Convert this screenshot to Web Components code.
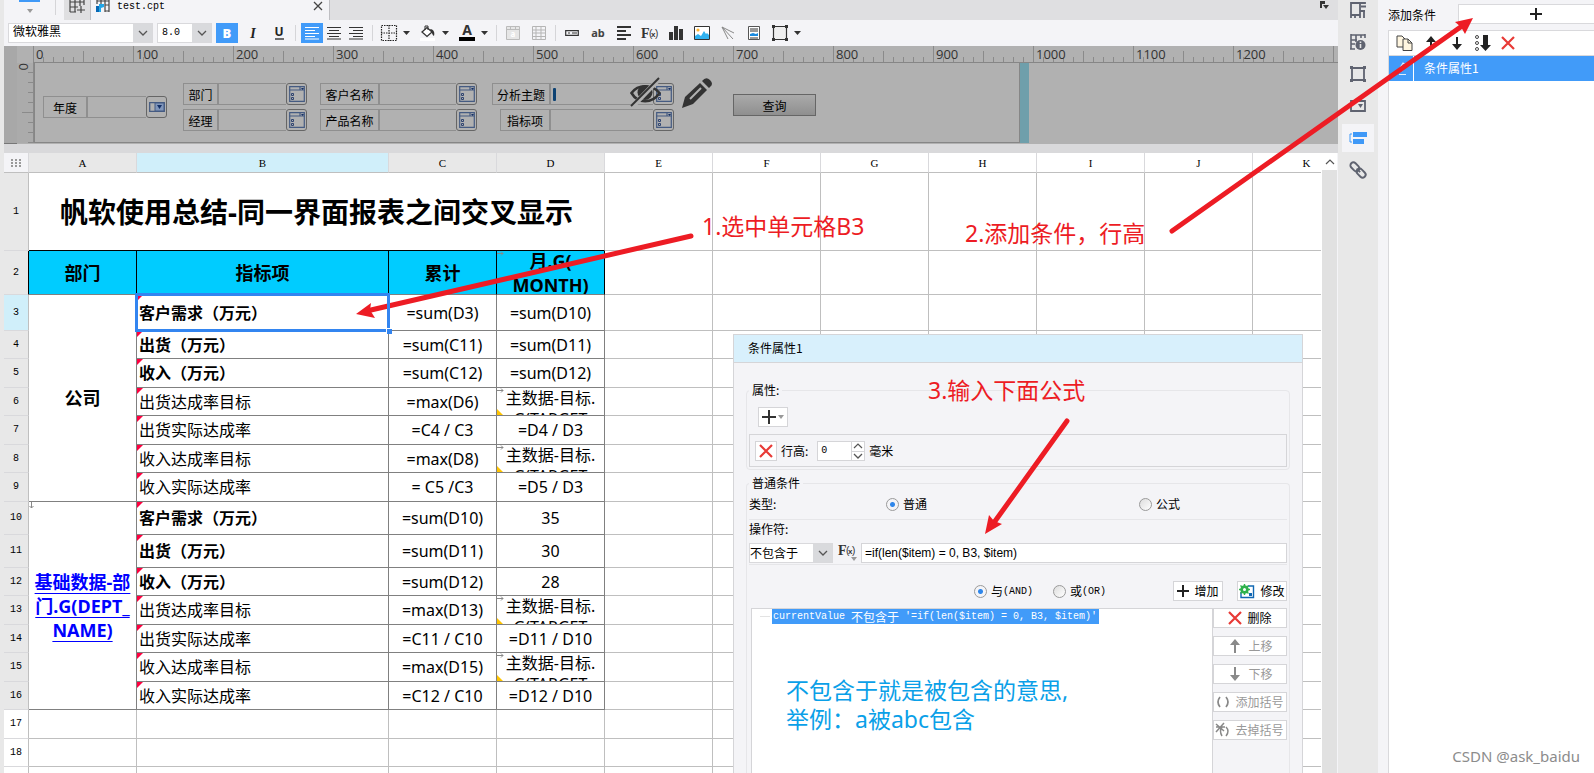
<!DOCTYPE html>
<html lang="zh-CN">
<head>
<meta charset="utf-8">
<title>test.cpt</title>
<style>
  body { margin: 0; font-family: "Liberation Mono", "Noto Sans CJK SC", sans-serif; font-size: 12px; color: #000; background: #fff; }
</style>
</head>
<body>
<report-designer></report-designer>
<script>
const CJK = '"Noto Sans", "Noto Sans CJK SC", sans-serif';

const RESET = `
  *, *::before, *::after { box-sizing: border-box; }
  button, input, select { font: inherit; color: inherit; margin: 0; padding: 0; border: 0; border-radius: 0; background: none; }
  button { display: flex; align-items: center; justify-content: center; }
  select { appearance: none; outline: none; }
`;

function define(name, css, html) {
  customElements.define(name, class extends HTMLElement {
    connectedCallback() {
      if (this.shadowRoot) return;
      const root = this.attachShadow({ mode: 'open' });
      root.innerHTML = `<style>${RESET}${css}</style>${typeof html === 'function' ? html(this) : html}`;
    }
  });
}

const ICONS = {
  chevron: ['10 6', '<path d="M1 1 5 5 9 1" fill="none" stroke="#555" stroke-width="1.300"/>'],
  chevronUp: ['10 6', '<path d="M1 5 5 1 9 5" fill="none" stroke="#555" stroke-width="1.200"/>'],
  caret: ['8 5', '<path d="M0 0H7L3.500 4z" fill="#333"/>'],
  caretGrey: ['6 4', '<path d="M0 0H6L3 4z" fill="#999"/>'],
  close: ['8 8', '<path d="M0 0 8 8M8 0 0 8" stroke="#444" stroke-width="1.300"/>'],
  gridPlus: ['16 14', '<path d="M1 0V12M6 0V12M11 0V6M1 2H15M1 7H9M1 12H7M15 0V5M12 6V13M8 10H16" stroke="#444" stroke-width="1.200" fill="none"/>'],
  cptFile: ['14 13', '<path d="M1 0V4M5 0V4M9 0V12M13 0V12M1 1H13M9 5H13M9 11H13" stroke="#444" stroke-width="1.200" fill="none"/><path d="M0 6H4V12H0z" fill="#0a68b4"/><path d="M3 4H8V7L5 8V12H3z" fill="#22a7e8"/>'],
  bold: ['12 12', '<text x="6" y="11" text-anchor="middle" font-family="Noto Sans" font-weight="900" font-size="13" fill="#fff">B</text>'],
  italic: ['12 12', '<text x="6" y="11" text-anchor="middle" font-family="Liberation Serif" font-weight="bold" font-style="italic" font-size="14" fill="#222">I</text>'],
  underline: ['12 14', '<text x="6" y="10" text-anchor="middle" font-family="Noto Sans" font-weight="bold" font-size="12" fill="#222">U</text><path d="M2 13H11" stroke="#222" stroke-width="1.300"/>'],
  left: ['16 14', '<path d="M1 1.500H15M1 4.500H11M1 7.500H15M1 10.500H11M1 13H15" stroke="#fff" stroke-width="1"/>'],
  center: ['16 14', '<path d="M1 1.500H15M3 4.500H13M1 7.500H15M3 10.500H13M1 13H15" stroke="#333" stroke-width="1.200"/>'],
  right: ['16 14', '<path d="M1 1.500H15M5 4.500H15M1 7.500H15M5 10.500H15M1 13H15" stroke="#333" stroke-width="1.200"/>'],
  border: ['16 16', '<path d="M.5.5H15.500V15.500H.5zM8 0V16M0 8H16" fill="none" stroke="#222" stroke-width="1.200" stroke-dasharray="1.500 1"/>'],
  bucket: ['16 16', '<path d="M2 7 7 2.500 12 7 7 11.500z" fill="#fff" stroke="#333" stroke-width="1.300"/><path d="M5 5V1H8V5" fill="none" stroke="#333"/><path d="M10 4C14 4 15 8 14 11 12 10 12 7 10 4z" fill="#333"/><path d="M0 13H15V16H0z" fill="#fff"/>'],
  fontColor: ['16 16', '<text x="8" y="10" text-anchor="middle" font-family="Noto Sans" font-weight="bold" font-size="14" fill="#333">A</text><path d="M0 12H16V16H0z" fill="#000"/>'],
  cellA: ['14 14', '<path d="M.5.5H13.500V13.500H.5zM0 3.500H14M4.500 0V3.500M9.500 0V3.500" fill="#e6e6e6" stroke="#bbb"/><text x="7" y="11" text-anchor="middle" font-family="Noto Sans" font-weight="bold" font-size="8" fill="#fff">a</text>'],
  grid: ['14 14', '<path d="M.5.5H13.500V13.500H.5zM0 4H14M0 7H14M0 10.500H14M4 0V14M9 0V14" fill="none" stroke="#b5b5b5"/>'],
  widget: ['14 6', '<path d="M.7.7H13.300V5.300H.7z" fill="none" stroke="#333" stroke-width="1.200"/><path d="M3 3H5M7 3H12" stroke="#333" stroke-width="1.200"/>'],
  ab: ['14 12', '<text x="7" y="10" text-anchor="middle" font-family="Noto Sans" font-weight="bold" font-size="11" fill="#444">ab</text>'],
  lines: ['14 14', '<path d="M0 1H14M0 5H9M0 9H14M0 13H9" stroke="#333" stroke-width="1.800"/>'],
  fx: ['18 14', '<text x="0" y="12" font-family="Liberation Serif" font-weight="bold" font-size="14" fill="#333">F</text><text x="8" y="11" font-family="Liberation Sans" font-size="10" fill="#333">(</text><text x="10" y="11" font-family="Liberation Sans" font-weight="bold" font-size="8" fill="#333">x</text><text x="14" y="11" font-family="Liberation Sans" font-size="10" fill="#333">)</text>'],
  bars: ['14 14', '<path d="M0 6H4V14H0zM5 0H9V14H5zM10 3H14V14H10z" fill="#333"/>'],
  picture: ['16 14', '<path d="M.5.5H15.500V13.500H.5z" fill="#fff" stroke="#333"/><circle cx="4" cy="4" r="1.600" fill="#ffb42e"/><path d="M1 13V10L4 8 7 10 10 5 12 8 13 7 15 9V13z" fill="#2fb1f0"/>'],
  slash: ['14 14', '<path d="M1 1 13 7M1 1 12 13M1 1 7 13" stroke="#888" stroke-width="1" fill="none"/>'],
  report: ['12 14', '<path d="M.5.5H11.500V13.500H.5z" fill="#fff" stroke="#555"/><path d="M2 3H10M2 5H10M2 12H10" stroke="#333"/><path d="M2 10V8L5 7 8 8 10 7V10z" fill="#1a8ae0"/>'],
  shape: ['16 16', '<path d="M1.500 1.500H14.500V14.500H1.500z" fill="#eee" stroke="#333" stroke-width="1.200"/><path d="M0 0H3V3H0zM13 0H16V3H13zM0 13H3V16H0zM13 13H16V16H13z" fill="#333"/>'],
  pin: ['9 9', '<path d="M0 0H5V3H2V7H0z" fill="#333"/><path d="M3 4H9L6 8z" fill="#333"/>'],
  dots: ['10 8', '<path d="M0 0h2v2H0zM4 0h2v2H4zM8 0h2v2H8zM0 3h2v2H0zM4 3h2v2H4zM8 3h2v2H8zM0 6h2v2H0zM4 6h2v2H4zM8 6h2v2H8z" fill="#999"/>'],
  dropWidget: ['16 10', '<path d="M.7.7H15.300V9.300H.7z" fill="none" stroke="#455b82" stroke-width="1.300"/><path d="M6 1H15V9H6z" fill="#8096bb" stroke="#455b82"/><path d="M8 3H13L10.500 7z" fill="#132f66"/>'],
  treeWidget: ['16 16', '<path d="M.7.7H15.300V15.300H.7zM0 4H16M11 1V4" fill="none" stroke="#455b82" stroke-width="1.200"/><path d="M12 2H15L13.500 4z" fill="#132f66"/><path d="M2.500 7.500H4.500V9.500H2.500zM2.500 11.500H4.500V13.500H2.500z" fill="none" stroke="#2f4470"/>'],
  eye: ['30 30', '<path d="M1.500 16C8 7 22 7 29.500 16 22 27 8 27 1.500 16z" fill="none" stroke="#333" stroke-width="2.600"/><circle cx="15" cy="15.500" r="7.500" fill="#333"/><path d="M2 30 30 1" stroke="#b1b1b1" stroke-width="5"/><path d="M1 29 29 1" stroke="#333" stroke-width="2"/>'],
  pencil: ['30 30', '<path d="M0 30 3 19 18 5 25 12 11 26z" fill="#333"/><path d="M8 21 19 10" stroke="#b1b1b1" stroke-width="2"/><path d="M20 3Q24-2 28 2 32 6 28 9L27 10 20 3z" fill="#333"/>'],
  railCell: ['16 16', '<path d="M1 0V13H10V9H15M1 1H15M5 12V16M10 12V16M10 1V10M11 4.500H16M14 9V16M1 12V16M15 0V2" fill="none" stroke="#5f6370" stroke-width="1.800"/>'],
  railInfo: ['16 16', '<path d="M1 0V15M1 1H15M6 1V8M11 1V4M1 6H7M1 10H5M0 15H5M15 0V4" fill="none" stroke="#5f6370" stroke-width="1.600"/><circle cx="10.500" cy="11" r="5" fill="#5f6370"/><path d="M10.500 7.500V9M10.500 10V14" stroke="#e8e8e8" stroke-width="1.600"/>'],
  railFloat: ['16 16', '<path d="M2 2H14V14H2z" fill="none" stroke="#5f6370" stroke-width="1.800"/><path d="M0 0H3V3H0zM13 0H16V3H13zM0 13H3V16H0zM13 13H16V16H13z" fill="#5f6370"/>'],
  railWidget: ['16 12', '<path d="M1 1H15V11H1z" fill="none" stroke="#5f6370" stroke-width="1.800"/><path d="M8 4H13L10.500 8z" fill="#5f6370"/>'],
  railCond: ['18 12', '<path d="M4 0H18V5H4zM4 7H15V12H4z" fill="#3f99f7"/><path d="M3 2H1V10H3" fill="none" stroke="#3f99f7" stroke-width="1"/>'],
  railLink: ['16 16', '<g transform="rotate(45 8 8)" fill="none" stroke="#5f6370" stroke-width="1.900"><rect x="-1.500" y="5" width="10" height="6" rx="3"/><rect x="7.500" y="5" width="10" height="6" rx="3"/><path d="M6 8H11"/></g>'],
  plus: ['12 12', '<path d="M6 0V12M0 6H12" stroke="#222" stroke-width="2"/>'],
  plusBig: ['14 14', '<path d="M7 0V14M0 7H14" stroke="#333" stroke-width="2"/>'],
  copy: ['17 16', '<path d="M1 1H6L9 4V12H1z" fill="#fff6e0" stroke="#444"/><path d="M7 4H12L16 8V15.500H7z" fill="#fff6e0" stroke="#444"/><path d="M12 4V8H16" fill="none" stroke="#444"/>'],
  up: ['16 16', '<path d="M8 1 13 7H9V14H7V7H3z" fill="#222"/>'],
  down: ['16 16', '<path d="M7 2H9V9H13L8 15 3 9H7z" fill="#222"/>'],
  upGrey: ['16 16', '<path d="M8 1 13 7H9V15H7V7H3z" fill="#8a8a8a"/>'],
  downGrey: ['16 16', '<path d="M7 1H9V9H13L8 15 3 9H7z" fill="#8a8a8a"/>'],
  bottom: ['16 16', '<circle cx="2" cy="2" r="1.500" fill="none" stroke="#444"/><circle cx="2" cy="8" r="1.500" fill="none" stroke="#444"/><circle cx="2" cy="14" r="1.500" fill="none" stroke="#444"/><path d="M8 0H13V10H16L10.500 16 5 10H8z" fill="#222"/>'],
  cross: ['14 14', '<path d="M1 1 13 13M13 1 1 13" stroke="#e83a36" stroke-width="2.200"/>'],
  edit: ['12 14', '<path d="M3 9 8 1 11 3 7 9M4 12.500H11M3 9H6" fill="none" stroke="#dceeff" stroke-width="1.200"/>'],
  modify: ['16 14', '<path d="M9 2H14.500V13.500H2V8" fill="none" stroke="#1268b3" stroke-width="1.400"/><path d="M10 9H13V12H10z" fill="#1268b3"/><circle cx="5.500" cy="5.500" r="3" fill="none" stroke="#2fb24c" stroke-width="2.600"/><path d="M5.500 0V11M0 5.500H11M1.500 1.500 9.500 9.500M9.500 1.500 1.500 9.500" stroke="#2fb24c" stroke-width="1.400"/><circle cx="5.500" cy="5.500" r="1.500" fill="#fff"/>'],
  paren: ['14 12', '<path d="M4 1Q0 6 4 11M10 1Q14 6 10 11" fill="none" stroke="#888" stroke-width="1.700"/>'],
  unparen: ['14 14', '<path d="M6 4Q3 8 6 13M10 4Q14 8 10 13M0 1 8 8M8 0 0 9M0 4H9" fill="none" stroke="#888" stroke-width="1.500"/>'],
  expandRight: ['7 5', '<path d="M0 2.500H6M4 .5 6 2.500 4 4.500" fill="none" stroke="#888"/>'],
  expandDown: ['5 7', '<path d="M2.500 0V6M.5 4 2.500 6 4.500 4" fill="none" stroke="#888"/>']
};

define('ui-icon', `:host { display: inline-flex; flex: none; } svg { display: block; overflow: visible; }`, host => {
  const [size, body] = ICONS[host.getAttribute('name')];
  const [w, h] = size.split(' ');
  return `<svg width="${w}" height="${h}" viewBox="0 0 ${w} ${h}" aria-hidden="true">${body}</svg>`;
});

define('tool-button', `
  :host { display: flex; width: 22px; height: 20px; }
  :host([menu]) { width: 35px; }
  button { flex: 1; }
  span { width: 22px; display: flex; justify-content: center; }
  i { width: 13px; display: flex; justify-content: center; }
  :host([on]) button { background: #419bf9; }
`, h => `<button type="button" title="${h.title}"><span><ui-icon name="${h.getAttribute('icon')}"></ui-icon></span>${h.hasAttribute('menu') ? '<i><ui-icon name="caret"></ui-icon></i>' : ''}</button>`);

define('drop-select', `
  :host { display: grid; height: 20px; border: 1px solid #d9d9dc; background: #fff; }
  select { grid-area: 1 / 1; width: 100%; padding-left: 4px; line-height: 18px; }
  :host([flush]) select { padding-left: 0; }
  span { grid-area: 1 / 1; justify-self: end; width: 19px; display: flex; align-items: center; justify-content: center; background: #d9dadd; pointer-events: none; }
`, h => `<select aria-label="${h.getAttribute('label')}"><option>${h.getAttribute('value')}</option></select><span><ui-icon name="chevron"></ui-icon></span>`);

define('document-tabs', `
  :host { display: flex; height: 20px; background: #dfdfe1; }
  .home { width: 60px; background: #f4f4f7; display: flex; }
  .logo { margin-left: 15px; width: 21px; display: flex; flex-direction: column; align-items: center; gap: 7px; }
  .logo b { width: 21px; height: 2px; background: #3f99f7; }
  .home hr { margin: 0 0 5px 15px; border: 0; width: 1px; background: #d5d5d8; }
  .new { width: 27px; border-right: 1px solid #bfbfc3; background: #dfdfe1; align-items: flex-start; }
  .tab { width: 239px; padding-left: 5px; display: flex; align-items: flex-start; background: #f4f4f7; border-right: 1px solid #bfbfc3; }
  .tab span { margin-left: 7px; font-size: 10px; line-height: 14px; flex: 1; }
  .tab button { margin: 2px 7px 0 0; }
  .pin { margin: 1px 9px auto auto; }
`, `<div class="home"><div class="logo"><b></b><ui-icon name="caretGrey"></ui-icon></div><hr></div>
<button class="new" type="button" title="新建"><ui-icon name="gridPlus"></ui-icon></button>
<div class="tab"><ui-icon name="cptFile"></ui-icon><span>test.cpt</span><button type="button" title="关闭"><ui-icon name="close"></ui-icon></button></div>
<button class="pin" type="button" title="列表"><ui-icon name="pin"></ui-icon></button>`);

define('format-toolbar', `
  :host { display: flex; align-items: center; gap: 4px; height: 26px; padding: 0 4px; background: #f4f4f7; }
  .font { width: 145px; } .size { width: 55px; font-size: 10px; }
  .group { display: flex; }
  hr { margin: 0 1px; border: 0; width: 1px; height: 16px; background: #d5d5d8; }
`, `<drop-select class="font" label="字体" value="微软雅黑"></drop-select><drop-select class="size" label="字号" value="8.0"></drop-select>
<tool-button icon="bold" title="加粗" on></tool-button><tool-button icon="italic" title="斜体"></tool-button><tool-button icon="underline" title="下划线"></tool-button><hr>
<div class="group"><tool-button icon="left" title="左对齐" on></tool-button><tool-button icon="center" title="居中"></tool-button><tool-button icon="right" title="右对齐"></tool-button></div><hr>
<tool-button icon="border" title="边框" menu></tool-button><tool-button icon="bucket" title="背景" menu></tool-button><tool-button icon="fontColor" title="字色" menu></tool-button><hr>
<tool-button icon="cellA" title="合并"></tool-button><tool-button icon="grid" title="拆分"></tool-button><hr>
<tool-button icon="widget" title="控件"></tool-button><tool-button icon="ab" title="文本"></tool-button><tool-button icon="lines" title="富文本"></tool-button><tool-button icon="fx" title="公式"></tool-button><tool-button icon="bars" title="图表"></tool-button><tool-button icon="picture" title="图片"></tool-button><tool-button icon="slash" title="斜线"></tool-button><tool-button icon="report" title="子报表"></tool-button><tool-button icon="shape" title="悬浮元素" menu></tool-button>`);

define('param-field', `
  :host { display: flex; height: 22px; }
  label { border: 1px solid #8f8f8f; border-right-width: 2px; display: flex; align-items: center; justify-content: center; }
  input { flex: 1; min-width: 0; border: 1px solid #8f8f8f; border-width: 1px 0; }
  button { width: 21px; border: 1px solid #666; border-radius: 3px; }
`, h => `<label for="f" style="width:${h.getAttribute('lw')}px">${h.getAttribute('label')}</label><input id="f" type="text"><button type="button" title="展开"><ui-icon name="${h.getAttribute('icon') || 'treeWidget'}"></ui-icon></button>`);

define('param-pane', `
  :host { display: grid; grid-template: 17px 80px / 13px 17px 1fr; background: #b1b1b1; overflow: hidden; font-family: "Noto Sans CJK SC", sans-serif; }
  .edge { grid-row: 1 / 3; background: #a8a8a8; }
  .corner { background: #a8a8a8; border-right: 1px solid #777; border-bottom: 1px solid #777; }
  .ruler { grid-column: 2 / 4; grid-row: 1; margin-left: 16px; display: flex; overflow: hidden; border-bottom: 1px solid #868686; }
  .ruler span { flex: none; width: 100px; padding-left: 3px; font: 13px/17px "Open Sans", sans-serif; color: #333;
    background: linear-gradient(#8a8a8a, #8a8a8a) 0 0 / 1px 100% no-repeat, linear-gradient(#8a8a8a, #8a8a8a) 50px 100% / 1px 11px no-repeat, linear-gradient(to right, #8a8a8a 1px, transparent 1px) 0 100% / 10px 5px repeat-x; }
  .side { grid-column: 2; grid-row: 2; background: linear-gradient(#8a8a8a, #8a8a8a) 100% 49px / 11px 1px no-repeat, linear-gradient(to bottom, transparent 9px, #8a8a8a 9px) 100% 0 / 5px 10px repeat-y, #ababab; border-right: 1px solid #8a8a8a; }
  .side span { display: block; writing-mode: vertical-rl; transform: rotate(180deg); font: 13px/13px "Open Sans", sans-serif; color: #333; width: 11px; }
  .body { grid-column: 3; grid-row: 2; display: flex; }
  form { width: 986px; border: 1px solid #868686; border-width: 0 1px 1px 1px; padding: 20px 0 0 8px; display: flex; position: relative; }
  .grip { width: 9px; background: #6f9fab; }
  .one { width: 124px; margin: 13px 16px 0 0; }
  .col { display: flex; flex-direction: column; gap: 4px; align-items: stretch; }
  .c2 { width: 124px; margin-right: 13px; } .c3 { width: 157px; margin-right: 15px; } .c4 { width: 182px; margin-right: 59px; align-items: flex-end; }
  .c4 > :first-child { width: 182px; } .c4 > :last-child { width: 174px; }
  .query { width: 83px; height: 22px; margin-top: 11px; border: 1px solid #666; background: linear-gradient(#aaa, #8f8f8f); }
  .eye { position: absolute; left: 595px; top: 14px; } .pen { position: absolute; left: 647px; top: 15px; }
  .mark { position: absolute; left: 518px; top: 25px; width: 3px; height: 13px; background: #0d4273; border-radius: 1px; }
`, `<div class="edge"></div><div class="corner"></div>
<div class="ruler">${Array.from({ length: 14 }, (_, i) => `<span>${i < 13 ? i * 100 : ''}</span>`).join('')}</div>
<div class="side"><span>0</span></div>
<div class="body"><form>
<param-field class="one" label="年度" lw="45" icon="dropWidget"></param-field>
<div class="col c2"><param-field label="部门" lw="36"></param-field><param-field label="经理" lw="36"></param-field></div>
<div class="col c3"><param-field label="客户名称" lw="60"></param-field><param-field label="产品名称" lw="60"></param-field></div>
<div class="col c4"><param-field label="分析主题" lw="59"></param-field><param-field label="指标项" lw="51"></param-field></div>
<button class="query" type="button">查询</button><div class="mark"></div>
<ui-icon class="eye" name="eye"></ui-icon><ui-icon class="pen" name="pencil"></ui-icon>
</form><div class="grip"></div></div>`);

const ROWS = [
  [78, [{ t: '帆软使用总结-同一界面报表之间交叉显示', k: 'title', cs: 4 }]],
  [44, [{ t: '部门', k: 'head' }, { t: '指标项', k: 'head' }, { t: '累计', k: 'head' }, { t: '月.G(<br>MONTH)', k: 'head two', ex: 1 }]],
  [36, [{ t: '公司', k: 'dept', rs: 7 }, { t: '客户需求（万元）', k: 'name b sel', sel: 1 }, '=sum(D3)', '=sum(D10)']],
  [28, [{ t: '出货（万元）', k: 'name b' }, '=sum(C11)', '=sum(D11)']],
  [29, [{ t: '收入（万元）', k: 'name b' }, '=sum(C12)', '=sum(D12)']],
  [28, [{ t: '出货达成率目标', k: 'name' }, '=max(D6)', 'T']],
  [29, [{ t: '出货实际达成率', k: 'name' }, '=C4 / C3', '=D4 / D3']],
  [28, [{ t: '收入达成率目标', k: 'name' }, '=max(D8)', 'T']],
  [29, [{ t: '收入实际达成率', k: 'name' }, '= C5 /C3', '=D5 / D3']],
  [33, [{ t: '基础数据-部<br>门.G(DEPT_<br>NAME)', k: 'dept link', rs: 7, ed: 1 }, { t: '客户需求（万元）', k: 'name b' }, '=sum(D10)', '35']],
  [33, [{ t: '出货（万元）', k: 'name b' }, '=sum(D11)', '30']],
  [28, [{ t: '收入（万元）', k: 'name b' }, '=sum(D12)', '28']],
  [29, [{ t: '出货达成率目标', k: 'name' }, '=max(D13)', 'T']],
  [28, [{ t: '出货实际达成率', k: 'name' }, '=C11 / C10', '=D11 / D10']],
  [29, [{ t: '收入达成率目标', k: 'name' }, '=max(D15)', 'T']],
  [28, [{ t: '收入实际达成率', k: 'name' }, '=C12 / C10', '=D12 / D10']],
  [29, ['', '', '', '']], [28, ['', '', '', '']], [28, ['', '', '', '']]
];

function renderSheet() {
  const heads = [...'ABCDEFGHIJK'].map(c => `<th scope="col" class="${c === 'B' ? 'hot' : 'ACD'.includes(c) ? 'used' : ''}">${c}</th>`).join('');
  const body = ROWS.map(([h, cells], i) => {
    const n = i + 1;
    const data = cells.map(c => {
      if (typeof c === 'string') c = c === 'T' ? { t: '主数据-目标.<br>G(TARGET', k: 'two tgt', ex: 1 } : { t: c, k: '' };
      const inner = c.k.includes('link') ? `<a href="#dept">${c.t}</a>` : `<span>${c.t}</span>`;
      return `<td class="${n > 16 ? 'empty' : c.k}"${c.cs ? ` colspan="${c.cs}"` : ''}${c.rs ? ` rowspan="${c.rs}"` : ''}>${c.rs ? inner : `<div style="height:${h - 1}px">${inner}</div>`}${c.ex ? '<ui-icon class="ex" name="expandRight"></ui-icon>' : ''}${c.ed ? '<ui-icon class="ex" name="expandDown"></ui-icon>' : ''}${c.sel ? '<i class="handle"></i>' : ''}</td>`;
    }).join('');
    return `<tr class="r${n}" style="height:${h}px"><th scope="row" class="${n === 3 ? 'hot' : n < 17 ? 'used' : ''}">${n}</th>${data}${'<td class="empty"></td>'.repeat(7)}</tr>`;
  }).join('');
  return `<table><colgroup><col class="n"><col><col class="w"><col span="9"></colgroup><thead><tr><th class="all"><ui-icon name="dots"></ui-icon></th>${heads}</tr></thead><tbody>${body}</tbody></table>`;
}

define('report-sheet', `
  :host { display: flex; flex: 1; min-height: 0; overflow: hidden; background: #fff; position: relative; font-family: ${CJK}; }
  .view { flex: 1; overflow: hidden; min-width: 0; }
  table { table-layout: fixed; width: 1357px; border-collapse: separate; border-spacing: 0; }
  col { width: 108px; } .n { width: 25px; } .w { width: 252px; }
  th, td { padding: 0; border: 0 solid #bfbfbf; border-width: 0 1px 1px 0; }
  th { font: 10px/12px "Liberation Mono", monospace; }
  thead tr { height: 20px; } thead th { border-right-color: #d9d9dc; font: 11px/14px "Liberation Serif", serif; }
  thead .all { background: #f4f4f7; }
  tbody th { border-bottom-color: #d9d9dc; }
  .used { background: #e8e8e8; } .hot { background: #d0effa; }
  td { position: relative; text-align: center; font-size: 16px; line-height: 22px; border-color: #808080; white-space: nowrap; vertical-align: middle; }
  td div { display: flex; align-items: center; justify-content: center; overflow: hidden; }
  .title { font-size: 28px; line-height: 36px; font-weight: bold; border-color: #bfbfbf; border-bottom-color: #000; }
  .head { background: #0cf; font-size: 18px; line-height: 24px; font-weight: bold; border-right-color: #000; }
  .r2 th { border-right-color: #000; }
  .dept { font-size: 18px; line-height: 24px; font-weight: bold; }
  .dept a { color: #00f; text-underline-offset: 4px; text-decoration-thickness: 1px; }
  .name div { justify-content: flex-start; padding-left: 2px; }
  .b { font-weight: bold; }
  .name::before { content: ""; position: absolute; left: 0; top: 0; border: 3px solid #ff0040; border-right-color: transparent; border-bottom-color: transparent; }
  .tgt div { align-items: flex-start; line-height: 21px; }
  .tgt::before { content: ""; position: absolute; left: 0; bottom: 0; border: 3px solid #ffc400; border-right-color: transparent; border-top-color: transparent; }
  .ex { position: absolute; left: 0; top: 0; }
  .empty { border-color: #bfbfbf; }
  .sel { z-index: 1; }
  .sel::after { content: ""; position: absolute; inset: -2px; border: 3px solid #3385f0; }
  .handle { position: absolute; right: -4px; bottom: -4px; width: 6px; height: 6px; background: #3385f0; border: 1px solid #fff; border-width: 1px 0 0 1px; z-index: 1; }
  .bar { flex: none; width: 17px; border-left: 1px solid #fff; border-right: 1px solid #f4f4f7; background: #e1e1e1; }
  .bar button { width: 100%; height: 17px; background: #fff; }
  ::slotted(*) { position: absolute; left: 729px; top: 181px; }
`, `<div class="view">${renderSheet()}</div><div class="bar"><button type="button" title="向上"><ui-icon name="chevronUp"></ui-icon></button></div><slot></slot>`);

define('property-rail', `
  :host { display: flex; flex-direction: column; gap: 4px; align-items: center; background: #e8e8e8; overflow: hidden; }
  button { width: 32px; height: 28px; flex: none; }
  button:first-of-type { height: 24px; padding-bottom: 4px; }
  .on { background: #f4f4f7; }
`, `${[['railCell', '单元格元素'], ['railInfo', '单元格属性'], ['railFloat', '悬浮元素'], ['railWidget', '控件设置'], ['railCond', '条件属性'], ['railLink', '超级链接']].map(([i, t]) => `<button type="button" title="${t}"${i === 'railCond' ? ' class="on"' : ''}><ui-icon name="${i}"></ui-icon></button>`).join('')}`);

define('condition-panel', `
  :host { display: flex; flex-direction: column; background: #f4f4f7; overflow: hidden; padding: 4px 0 0 10px; font-family: "Noto Sans CJK SC", sans-serif; }
  header { display: flex; height: 20px; align-items: center; margin-bottom: 6px; flex: none; }
  header span { width: 70px; }
  header button { flex: 1; height: 20px; background: #fff; border: 1px solid #d9d9dc; border-right: 0; padding-left: 18px; }
  .box { flex: 1; background: #fff; border: 1px solid #d9d9dc; border-width: 1px 0 0 1px; }
  .tools { height: 25px; display: flex; align-items: center; gap: 10px; padding-left: 7px; border-bottom: 1px solid #d9d9dc; }
  .row { height: 25px; display: flex; align-items: center; background: #419bf9; color: #fff; line-height: 16px; padding-bottom: 2px; }
  .row i { width: 25px; height: 25px; margin-bottom: -2px; display: flex; align-items: center; justify-content: center; border-right: 1px solid #fff; margin-right: 10px; }
`, `<header><span>添加条件</span><button type="button" title="添加"><ui-icon name="plus"></ui-icon></button></header>
<div class="box"><div class="tools">${[['copy', '复制'], ['up', '上移'], ['down', '下移'], ['bottom', '置底'], ['cross', '删除']].map(([i, t]) => `<button type="button" title="${t}"><ui-icon name="${i}"></ui-icon></button>`).join('')}</div>
<div class="row"><i><ui-icon name="edit"></ui-icon></i>条件属性1</div></div>`);

define('icon-button', `
  :host { display: flex; height: 20px; }
  button { flex: 1; gap: 5px; background: #fff; border: 1px solid #d5d5d8; white-space: nowrap; }
  button:disabled { color: #999; }
`, h => `<button type="button"${h.hasAttribute('off') ? ' disabled' : ''}><ui-icon name="${h.getAttribute('icon')}"></ui-icon><slot></slot></button>`);

define('condition-dialog', `
  :host { display: flex; flex-direction: column; width: 570px; height: 480px; background: #f4f4f7; border: 1px solid #d5d5d8; font-family: "Noto Sans CJK SC", sans-serif; line-height: 16px; }
  h2 { margin: 0; height: 28px; padding: 5px 14px; font-size: 12px; line-height: 16px; font-weight: normal; background: #d8f0fc; border-bottom: 1px solid #d5d5d8; }
  fieldset { margin: 0 12px; min-width: 0; border: 1px solid #e6e6e9; border-radius: 4px; padding: 0 2px; }
  legend { padding: 0 3px; margin-left: 0; }
  .attr { margin-top: 19px; height: 88px; }
  .add { width: 30px; height: 20px; margin: 9px 0 7px 9px; gap: 2px; background: #fff; border: 1px solid #d5d5d8; }
  .prop { height: 33px; border: 1px solid #d5d5d8; display: flex; align-items: center; padding-left: 5px; }
  .del { width: 22px; height: 20px; background: #fff; border: 1px solid #d5d5d8; margin-right: 4px; }
  .num { display: flex; width: 48px; height: 20px; margin: 0 4px 0 9px; border: 1px solid #d5d5d8; background: #fff; }
  .num input { flex: 1; min-width: 0; padding-left: 3px; font: 10px "Liberation Mono", monospace; }
  .num div { width: 13px; border-left: 1px solid #d5d5d8; }
  .num button { width: 12px; height: 9px; }
  .num button + button { border-top: 1px solid #d5d5d8; }
  .cond { margin-top: 5px; flex: 1; border-bottom: 0; border-radius: 4px 4px 0 0; display: block; }
  .type { display: flex; align-items: center; height: 29px; padding-bottom: 2px; border-bottom: 1px solid #e6e6e9; }
  .type > span { flex: none; width: 137px; } .type label { flex: none; width: 253px; } .type label + label { width: 100px; }
  label { display: flex; align-items: center; }
  input[type=radio] { appearance: none; width: 13px; height: 13px; margin-right: 4px; border: 1px solid #9a9a9a; border-radius: 50%; background: linear-gradient(135deg, #ddd, #fff); }
  input[type=radio]:checked { background: radial-gradient(circle, #2f86ea 0 2px, #f4f4f7 3px); }
  .op { display: block; height: 23px; padding-top: 1px; }
  .expr { display: grid; grid-template-columns: 84px 28px 1fr; border-bottom: 1px solid #e6e6e9; height: 22px; }
  .fx { height: 14px; position: relative; }
  .fx ui-icon + ui-icon { position: absolute; right: 4px; bottom: -4px; }
  .expr input { height: 20px; border: 1px solid #d5d5d8; background: #fff; padding-left: 3px; font: 12px "Liberation Sans", sans-serif; }
  .logic { display: flex; align-items: center; height: 20px; margin: 16px 0 7px; padding-left: 225px; }
  .logic small { font: 10px "Liberation Mono", monospace; }
  .logic label { width: 79px; white-space: nowrap; } .logic icon-button { width: 50px; } .logic icon-button:first-of-type { margin-left: auto; margin-right: 14px; }
  .list { display: grid; grid-template-columns: 1fr 74px; padding-left: 2px; }
  .tree { height: 200px; background: #fff; border: 1px solid #d5d5d8; display: flex; padding-left: 8px; }
  .tree::before { content: ""; width: 10px; height: 1px; margin: 7px 2px 0 0; background: #e3e3e3; }
  .tree span { height: 15px; padding: 0 2px 0 1px; display: flex; align-items: center; background: #419bf9; color: #fff; font: 10px/15px "Liberation Mono", monospace; white-space: pre; }
  .tree b { font: 12px/15px "Noto Sans CJK SC", sans-serif; }
  .ops { display: flex; flex-direction: column; gap: 8px; }
`, `<h2>条件属性1</h2>
<fieldset class="attr"><legend>属性:</legend>
<button class="add" type="button" title="添加属性"><ui-icon name="plusBig"></ui-icon><ui-icon name="caretGrey"></ui-icon></button>
<div class="prop"><button class="del" type="button" title="删除"><ui-icon name="cross"></ui-icon></button><label for="rh">行高:</label>
<div class="num"><input id="rh" type="text" value="0"><div><button type="button" title="增"><ui-icon name="chevronUp"></ui-icon></button><button type="button" title="减"><ui-icon name="chevron"></ui-icon></button></div></div><span>毫米</span></div></fieldset>
<fieldset class="cond"><legend>普通条件</legend>
<div class="type"><span>类型:</span><label><input type="radio" name="type" checked>普通</label><label><input type="radio" name="type">公式</label></div>
<span class="op">操作符:</span>
<div class="expr"><drop-select flush label="操作符" value="不包含于"></drop-select><button class="fx" type="button" title="公式"><ui-icon name="fx"></ui-icon><ui-icon name="caretGrey"></ui-icon></button><input type="text" aria-label="公式" value="=if(len($item) = 0, B3, $item)"></div>
<div class="logic"><label><input type="radio" name="logic" checked>与<small>(AND)</small></label><label><input type="radio" name="logic">或<small>(OR)</small></label><icon-button icon="plus">增加</icon-button><icon-button icon="modify">修改</icon-button></div>
<div class="list"><div class="tree"><span>currentValue <b>不包含于</b> '=if(len($item) = 0, B3, $item)'</span></div>
<div class="ops"><icon-button icon="cross">删除</icon-button><icon-button icon="upGrey" off>上移</icon-button><icon-button icon="downGrey" off>下移</icon-button><icon-button icon="paren" off>添加括号</icon-button><icon-button icon="unparen" off>去掉括号</icon-button></div></div>
</fieldset>`);

define('callout-layer', `
  :host { position: absolute; inset: 0; pointer-events: none; overflow: hidden; font: 23px/29px ${CJK}; color: #ed1c24; }
  svg { position: absolute; left: 0; top: 0; width: 100%; height: 100%; }
  p { position: absolute; margin: 0; white-space: nowrap; }
  .p1 { left: 702px; top: 212px; } .p2 { left: 965px; top: 219px; } .p3 { left: 928px; top: 376px; }
  .p4 { left: 786px; top: 676px; color: #0aa0e8; }
  .mark { right: 14px; bottom: 7px; font-size: 15px; line-height: 20px; color: #8c8c8c; }
`, `<svg aria-hidden="true"><g stroke="#ed1c24" stroke-width="5" stroke-linecap="round"><path d="M691 236 371 310M1172 231 1462 26M1067 421 993 524"/></g>
<g fill="#ed1c24"><path d="M356 314 371 303 370 310 375 318zM1473 18 1455 22 1461 27 1465 34zM985 534 989 515 994 521 1002 524z"/></g></svg>
<p class="p1">1.选中单元格B3</p><p class="p2">2.添加条件，行高</p><p class="p3">3.输入下面公式</p>
<p class="p4">不包含于就是被包含的意思,<br>举例：a被abc包含</p><p class="mark">CSDN @ask_baidu</p>`);

define('report-designer', `
  :host { display: grid; grid-template-columns: 4px minmax(0, 1fr) 40px 216px; height: 100vh; overflow: hidden; background: #e8e8e8; position: relative; }
  main { grid-column: 2; display: flex; flex-direction: column; min-height: 0; background: #d9d9db; }
  param-pane { margin-bottom: 9px; }
`, `<main><document-tabs></document-tabs><format-toolbar></format-toolbar><param-pane></param-pane><report-sheet><condition-dialog></condition-dialog></report-sheet></main>
<property-rail></property-rail><condition-panel></condition-panel><callout-layer></callout-layer>`);
</script>
</body>
</html>
